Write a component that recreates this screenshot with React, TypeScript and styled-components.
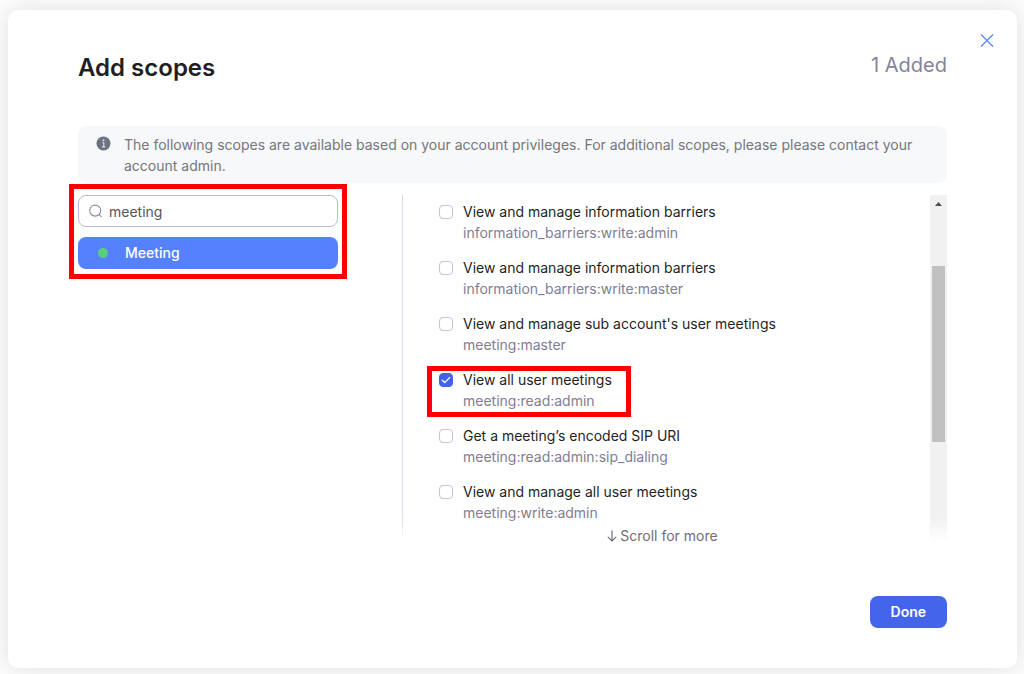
import React, { useState } from 'react';
import styled, { createGlobalStyle } from 'styled-components';

const GlobalStyle = createGlobalStyle`
  * { box-sizing: border-box; }
  body {
    margin: 0;
    background: #fdfdfd;
    color: #1f1f24;
    font: 14px/21px Inter, "Liberation Sans", sans-serif;
  }
  button, input { font: inherit; }
`;

const Page = styled.div`
  display: flex;
  min-height: 100vh;
  padding: 10px 7px 6px 8px;
  overflow: hidden;
`;

const Dialog = styled.section`
  position: relative;
  display: flex;
  flex: 1;
  flex-direction: column;
  padding: 0 70px 40px;
  border-radius: 10px;
  background: #fff;
  box-shadow: 0 0 24px rgba(0, 0, 0, 0.12);
`;

const CloseButton = styled.button`
  position: absolute;
  top: 22px;
  right: 22px;
  display: flex;
  padding: 0;
  border: 0;
  background: none;
  cursor: pointer;
`;

const Header = styled.header`
  display: flex;
  align-items: flex-start;
  justify-content: space-between;
  padding: 40px 0;
`;

const Title = styled.h1`
  margin: 0;
  font-size: 24px;
  font-weight: 600;
  line-height: 36px;
`;

const AddedCount = styled.span`
  color: #85839a;
  font-size: 20px;
  line-height: 30px;
`;

const Notice = styled.div`
  display: flex;
  gap: 13px;
  padding: 8px 18px 7px;
  border-radius: 8px;
  background: #f7f8fa;
  color: #76767a;

  svg { flex: none; margin-top: 2px; }
  p { margin: 0; }
`;

const Columns = styled.div`
  display: flex;
  height: 348px;
  margin-top: 12px;
`;

const Sidebar = styled.div`
  position: relative;
  display: flex;
  flex: 0 0 260px;
  flex-direction: column;
  align-self: flex-start;
  gap: 10px;
`;

const SearchField = styled.label`
  display: flex;
  align-items: center;
  gap: 6px;
  height: 32px;
  padding: 0 10px;
  border: 1px solid #bcbacf;
  border-radius: 8px;
`;

const SearchInput = styled.input`
  flex: 1;
  min-width: 0;
  padding: 0;
  border: 0;
  outline: 0;
  background: none;
  color: #55555f;
`;

const Category = styled.button`
  display: flex;
  align-items: center;
  gap: 17px;
  height: 32px;
  padding: 0 20px 1px;
  border: 0;
  border-radius: 8px;
  background: #5581ff;
  color: #fff;
  font-weight: 500;
  cursor: pointer;

  &::before {
    width: 10px;
    height: 10px;
    border-radius: 50%;
    background: #58cf7c;
    content: "";
  }
`;

const Highlight = styled.span<{ $inset: string }>`
  position: absolute;
  inset: ${({ $inset }) => $inset};
  border: 5px solid #fe0000;
  pointer-events: none;
`;

const ScopePane = styled.div`
  position: relative;
  display: flex;
  flex: 1;
  margin-left: 64px;
  overflow: hidden;
`;

const ScopeList = styled.ul`
  display: flex;
  flex: 1;
  flex-direction: column;
  gap: 14px;
  margin: 0;
  padding: 6px 0 0 36px;
  border-left: 1px solid #dcdaee;
  list-style: none;
`;

const ScopeItem = styled.li`
  position: relative;
  align-self: flex-start;
`;

const ScopeLabel = styled.label`
  display: flex;
  gap: 10px;
  white-space: nowrap;
`;

const Checkbox = styled.input`
  flex: none;
  width: 14px;
  height: 14px;
  margin: 4px 0 0;
  border: 1px solid #c4c2d8;
  border-radius: 4px;
  appearance: none;

  &:checked {
    border-color: #4262e8;
    background: #4262e8 url("data:image/svg+xml,%3Csvg xmlns='http://www.w3.org/2000/svg' viewBox='0 0 12 12' fill='none' stroke='white' stroke-width='1.3' stroke-linecap='round' stroke-linejoin='round'%3E%3Cpath d='M2.2 6.2 4.8 8.6 9.8 3.4'/%3E%3C/svg%3E") center / 12px no-repeat;
  }
`;

const ScopeCode = styled.span`
  display: block;
  color: #7f7d94;
`;

const Scrollbar = styled.div`
  display: flex;
  flex: 0 0 17px;
  flex-direction: column;
  align-items: center;
  gap: 60px;
  padding-top: 7px;
  background: #f1f1f1;
`;

const ScrollThumb = styled.div`
  width: 13px;
  height: 176px;
  background: #c1c1c1;
`;

const Fade = styled.div`
  position: absolute;
  inset: auto 0 0;
  display: flex;
  justify-content: center;
  height: 26px;
  padding: 8px 24px 0 0;
  background: linear-gradient(rgba(255, 255, 255, 0), #fff 96%);
`;

const ScrollMore = styled.button`
  display: flex;
  align-items: center;
  gap: 3px;
  height: 21px;
  padding: 0;
  border: 0;
  background: none;
  color: #6e6e7a;
  cursor: pointer;
`;

const Footer = styled.footer`
  display: flex;
  justify-content: flex-end;
  margin-top: 53px;
`;

const DoneButton = styled.button`
  height: 32px;
  padding: 0 21px 2px;
  border: 0;
  border-radius: 8px;
  background: #4465e9;
  color: #fff;
  font-weight: 600;
  cursor: pointer;
`;

const scopes = [
  { title: 'View and manage information barriers', code: 'information_barriers:write:admin' },
  { title: 'View and manage information barriers', code: 'information_barriers:write:master' },
  { title: "View and manage sub account's user meetings", code: 'meeting:master' },
  { title: 'View all user meetings', code: 'meeting:read:admin' },
  { title: 'Get a meeting’s encoded SIP URI', code: 'meeting:read:admin:sip_dialing' },
  { title: 'View and manage all user meetings', code: 'meeting:write:admin' },
];

export default function App() {
  const [query, setQuery] = useState('meeting');
  const [selected, setSelected] = useState<string[]>(['meeting:read:admin']);

  const toggle = (code: string) =>
    setSelected((s) => (s.includes(code) ? s.filter((c) => c !== code) : [...s, code]));

  return (
    <Page>
      <GlobalStyle />
      <Dialog role="dialog" aria-labelledby="dialog-title">
        <CloseButton type="button" aria-label="Close">
          <svg width="16" height="16" viewBox="0 0 16 16" stroke="#5581ff" strokeWidth="1.2">
            <path d="M2 2.5 14 14.5M14 2.5 2 14.5" />
          </svg>
        </CloseButton>
        <Header>
          <Title id="dialog-title">Add scopes</Title>
          <AddedCount>{selected.length} Added</AddedCount>
        </Header>
        <Notice>
          <svg width="15" height="15" viewBox="0 0 15 15">
            <circle cx="7.5" cy="7.5" r="7" fill="#6b7280" />
            <circle cx="7.5" cy="4.3" r="1" fill="#dfe1e6" />
            <path d="M6.2 6.7h1.6v4M6 10.9h3.2" fill="none" stroke="#dfe1e6" strokeWidth="1.1" />
          </svg>
          <p>
            The following scopes are available based on your account privileges. For additional
            scopes, please please contact your account admin.
          </p>
        </Notice>
        <Columns>
          <Sidebar>
            <SearchField>
              <svg width="14" height="14" viewBox="0 0 14 14" fill="none" stroke="#8f8da3" strokeWidth="1.1">
                <circle cx="6.2" cy="6.6" r="5.5" />
                <path d="M10.2 10.6 12.2 12.6" strokeLinecap="round" />
              </svg>
              <SearchInput
                aria-label="Search scopes"
                value={query}
                onChange={(e) => setQuery(e.target.value)}
              />
            </SearchField>
            <Category type="button">Meeting</Category>
            <Highlight $inset="-11px -9px -10px" />
          </Sidebar>
          <ScopePane>
            <ScopeList>
              {scopes.map(({ title, code }) => (
                <ScopeItem key={code}>
                  <ScopeLabel>
                    <Checkbox
                      type="checkbox"
                      checked={selected.includes(code)}
                      onChange={() => toggle(code)}
                    />
                    <span>
                      {title}
                      <ScopeCode>{code}</ScopeCode>
                    </span>
                  </ScopeLabel>
                  {code === 'meeting:read:admin' && <Highlight $inset="-3px -19px -6px -12px" />}
                </ScopeItem>
              ))}
            </ScopeList>
            <Scrollbar aria-hidden="true">
              <svg width="7" height="4" viewBox="0 0 7 4">
                <path d="M3.5 0 7 4H0z" fill="#505050" />
              </svg>
              <ScrollThumb />
            </Scrollbar>
            <Fade>
              <ScrollMore type="button">
                <svg width="10" height="12" viewBox="0 0 10 12" fill="none" stroke="#6e6e7a" strokeWidth="1.2">
                  <path d="M5 0.5V11M0.8 6.8 5 11 9.2 6.8" />
                </svg>
                Scroll for more
              </ScrollMore>
            </Fade>
          </ScopePane>
        </Columns>
        <Footer>
          <DoneButton type="button">Done</DoneButton>
        </Footer>
      </Dialog>
    </Page>
  );
}
